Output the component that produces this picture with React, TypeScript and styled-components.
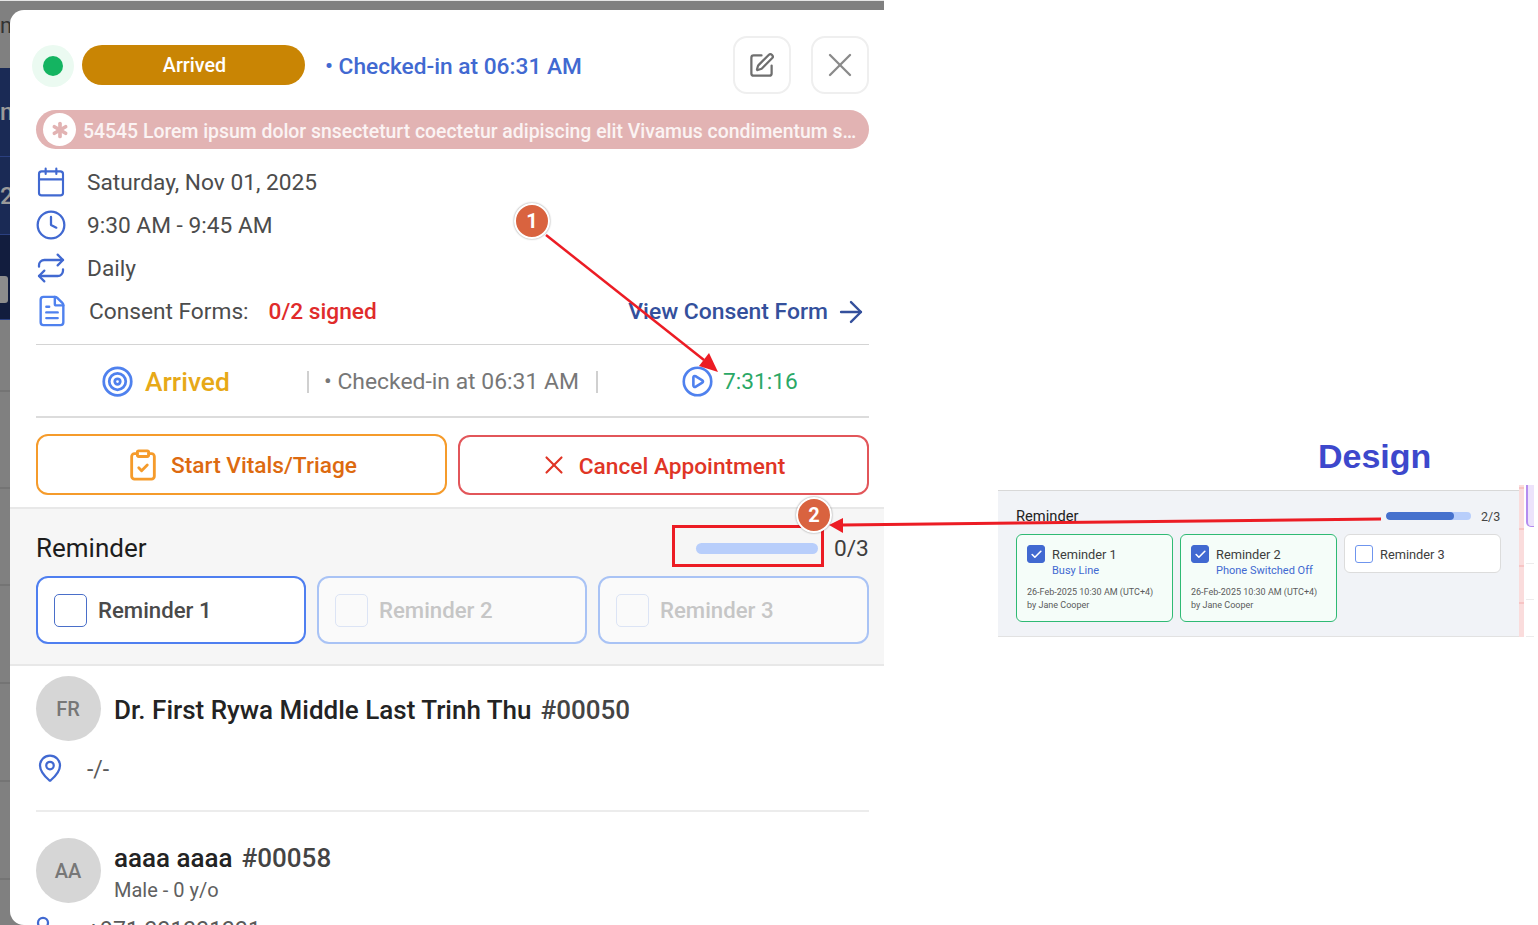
import React from "react";
import styled, { createGlobalStyle } from "styled-components";
import {
  Asterisk, ArrowRight, Calendar, Check, CirclePlay, ClipboardCheck, Clock, FileText, MapPin, Repeat, SquarePen, Target, User, X,
} from "lucide-react";

const Global = createGlobalStyle`
  html, body { margin: 0; padding: 0; background: #fff; overflow: hidden; }
  * { box-sizing: border-box; }
  body { font-family: Roboto, "Liberation Sans", sans-serif; }
`;

const Root = styled.div`
  position: relative; width: 1538px; height: 925px; overflow: hidden; display: flex; background: #fff;
`;
const Shot = styled.div`
  width: 884px; height: 925px; flex: none; display: flex; background: #808080;
  border-top: 1px solid #e6e6e6;
`;
const Backdrop = styled.div`
  width: 10px; flex: none; display: flex; flex-direction: column; overflow: hidden;
`;
const BackTop = styled.div`
  height: 67px; color: #333; font-size: 22px; line-height: 50px; white-space: nowrap;
`;
const BackNavy = styled.div<{ $dark?: boolean; $h: number }>`
  height: ${(p) => p.$h}px; flex: none; background: ${(p) => (p.$dark ? "#121d3e" : "#1a2a55")};
  border-bottom: 1px solid #2b4080; color: #9a9a9a; font-size: 24px; font-weight: 500;
  display: flex; align-items: center; white-space: nowrap; overflow: hidden; position: relative;
`;
const BackChip = styled.div`
  width: 8px; height: 27px; background: #8c8c8c; border-radius: 0 3px 3px 0; margin-top: 24px;
`;
const BackRow = styled.div<{ $h: number }>`
  height: ${(p) => p.$h}px; flex: none; border-bottom: 2px solid #747474;
`;

const Modal = styled.div`
  width: 874px; height: 915px; margin-top: 9px; background: #fff; border-radius: 14px 0 0 14px;
  overflow: hidden; display: flex; flex-direction: column;
`;
const Top = styled.div`
  flex: none; padding: 26px 15px 0 26px; display: flex; flex-direction: column;
`;
const Header = styled.div`
  display: flex; align-items: center; height: 58px; margin-left: -4px;
`;
const Dot = styled.div`
  width: 42px; height: 42px; margin-top: 2px; border-radius: 50%; background: #ebfaf1; display: flex; align-items: center; justify-content: center; flex: none;
`;
const DotInner = styled.div`
  width: 20px; height: 20px; border-radius: 50%; background: #14b461;
`;
const StatusPill = styled.div`
  width: 223px; height: 40px; margin-left: 8px; padding-left: 2px; border-radius: 20px; background: #c98504; color: #fff;
  display: flex; align-items: center; justify-content: center; font-size: 19.7px; font-weight: 500;
`;
const CheckedIn = styled.div`
  margin: 2px 0 0 20px; color: #4169d1; font-size: 22.7px; font-weight: 500; flex: 1; white-space: nowrap;
`;
const IconBtn = styled.div`
  width: 58px; height: 58px; border: 2px solid #efefef; border-radius: 14px; margin-left: 20px; color: #6f6f6f;
  display: flex; align-items: center; justify-content: center; flex: none;
`;
const EditBtn = styled(IconBtn)`
  padding-right: 2px;
`;
const CloseBtn = styled(IconBtn)`
  color: #8a8a8a;
`;
const Alert = styled.div`
  margin-top: 16px; height: 39px; border-radius: 20px; background: #e2b3b3; display: flex; align-items: center;
  padding: 0 11px 0 7px; gap: 7px; color: #fbf3f3; font-size: 19.4px; font-weight: 500;
`;
const AlertIcon = styled.div`
  width: 33px; height: 33px; border-radius: 50%; background: #fff; color: #e2b3b3; display: flex; align-items: center; justify-content: center; flex: none;
`;
const AlertText = styled.div`
  flex: 1; min-width: 0; padding-top: 3px; overflow: hidden; white-space: nowrap; text-overflow: ellipsis;
`;
const Info = styled.div`
  margin-top: 11px; display: flex; flex-direction: column; border-bottom: 1px solid #d4d4d4; padding-bottom: 12px;
`;
const InfoRow = styled.div`
  height: 43px; padding-top: 2px; display: flex; align-items: center; color: #4c4c4c; font-size: 22.7px;
`;
const InfoIcon = styled.div`
  width: 52px; flex: none; color: #4169d1; display: flex; align-items: center; margin: -2px 0 0 -1px;
`;
const Signed = styled.span`
  margin-left: 20px; color: #e02b2b; font-weight: 500;
`;
const ConsentLabel = styled.span`
  margin-left: 2px;
`;
const ViewLink = styled.div`
  margin-left: auto; margin-right: 1px; display: flex; align-items: center; gap: 6px; color: #34509c; font-size: 22.9px; font-weight: 500;
`;
const StatusRow = styled.div`
  height: 73px; padding: 2px 0 0 65px; display: flex; align-items: center; border-bottom: 2px solid #dcdcdc; color: #777; font-size: 22.9px;
`;
const ArrivedText = styled.span`
  margin-left: 11px; color: #e7a918; font-size: 26.4px; font-weight: 500; width: 162px;
`;
const Sep = styled.span`
  width: 2px; height: 22px; background: #d0d0d0; flex: none;
`;
const CheckedGray = styled.span`
  margin: 0 17px 0 15px; white-space: nowrap;
`;
const Timer = styled.span`
  margin-left: 9px; color: #2aa866; font-size: 22.7px;
`;
const PlayWrap = styled.span`
  margin-left: 83px; color: #4f81ee; display: flex;
`;
const Actions = styled.div`
  margin-top: 16px; display: grid; grid-template-columns: 411px 411px; gap: 11px; height: 61px;
`;
const ActionBtn = styled.div<{ $tone: "orange" | "red" }>`
  border: 2px solid ${(p) => (p.$tone === "orange" ? "#f59b2b" : "#e2565a")}; border-radius: 12px;
  color: ${(p) => (p.$tone === "orange" ? "#dd6a10" : "#e03526")}; font-size: 22.7px; font-weight: 500;
  display: flex; align-items: center; justify-content: center; gap: ${(p) => (p.$tone === "orange" ? 11 : 10)}px;
  padding-top: 2px; padding-right: ${(p) => (p.$tone === "orange" ? 0 : 3)}px;
  ${(p) => (p.$tone === "red" ? "margin-top: 1px;" : "")}
  svg { margin-top: -2px; color: ${(p) => (p.$tone === "orange" ? "#f59b2b" : "#e03526")}; }
`;
const ReminderSection = styled.div`
  flex: none; margin-top: 12px; height: 159px; background: #f6f6f6; border-top: 2px solid #e8e8e8; border-bottom: 2px solid #e8e8e8;
  padding: 0 15px 0 26px; display: flex; flex-direction: column;
`;
const ReminderHead = styled.div`
  height: 67px; display: flex; align-items: center; padding-top: 11px;
`;
const ReminderTitle = styled.div`
  flex: 1; font-size: 26px; font-weight: 400; color: #1d1d1d;
`;
const Track = styled.div`
  width: 122px; height: 11px; border-radius: 6px; background: #b8cefb;
`;
const Count = styled.div`
  margin-left: 16px; width: 35px; font-size: 22.7px; color: #3e3e3e;
`;
const ReminderCards = styled.div`
  display: grid; grid-template-columns: 270px 270px 271px; gap: 11px; height: 68px;
`;
const ReminderCard = styled.div<{ $off?: boolean }>`
  border: 2.5px solid ${(p) => (p.$off ? "#a9c3f5" : "#4f7ff0")}; border-radius: 12px; background: ${(p) => (p.$off ? "#fafafa" : "#fff")};
  display: flex; align-items: center; padding-left: 16px; gap: 11px; font-size: 22.2px; font-weight: 500;
  color: ${(p) => (p.$off ? "#c6c6c6" : "#4a4a4a")};
`;
const Box = styled.div<{ $off?: boolean }>`
  width: 33px; height: 33px; border-radius: 5px; border: 1.5px solid ${(p) => (p.$off ? "#dce4f5" : "#4a6fc9")}; flex: none;
`;
const People = styled.div`
  flex: none; padding: 0 15px 0 26px; display: flex; flex-direction: column;
`;
const Person = styled.div<{ $top: number }>`
  display: flex; align-items: center; gap: 13px; margin-top: ${(p) => p.$top}px;
`;
const PersonText = styled.div`
  padding-top: 3px;
`;
const Avatar = styled.div`
  width: 65px; height: 65px; border-radius: 50%; background: #d6d6d6; color: #777; font-size: 20px; font-weight: 500;
  display: flex; align-items: center; justify-content: center; flex: none; padding-right: 1px;
`;
const Name = styled.div`
  font-size: 26px; font-weight: 500; color: #232323; white-space: nowrap;
`;
const DoctorName = styled(Name)`
  padding-top: 2px;
`;
const Id = styled.span`
  margin-left: 9px; color: #444;
`;
const SubText = styled.div`
  margin-top: 5px; font-size: 20px; color: #606060;
`;
const PlainRow = styled.div<{ $top: number }>`
  display: flex; align-items: center; height: 30px; margin-top: ${(p) => p.$top}px; color: #5a5a5a; font-size: 23px;
`;
const ContactIcon = styled.div`
  width: 52px; flex: none; margin: -3px 0 0 -8px; color: #4169d1; display: flex;
`;
const PhoneText = styled.span`
  margin-left: 7px;
`;
const Rule = styled.div`
  margin-top: 26px; height: 2px; background: #ececec;
`;

const DesignCol = styled.div`
  flex: 1; padding: 437px 0 0 114px; display: flex; flex-direction: column;
`;
const DesignTitle = styled.div`
  width: 521px; height: 38px; line-height: 38px; padding-left: 320px; font-family: "Liberation Sans", sans-serif; font-weight: 700; font-size: 34px; color: #3d48cc;
`;
const DesignRow = styled.div`
  margin-top: 10px; display: flex; width: 536px; height: 152px;
`;
const DesignPanel = styled.div`
  width: 521px; height: 147px; margin-top: 5px; background: #f1f3f7; border-top: 1px solid #d8d8d8; border-bottom: 1px solid #e2e2e2;
  padding: 0 18px; display: flex; flex-direction: column; flex: none;
`;
const DHead = styled.div`
  height: 43px; display: flex; align-items: center; padding-top: 7px;
`;
const DTitle = styled.div`
  flex: 1; font-size: 14.7px; color: #222;
`;
const DTrack = styled.div`
  width: 85px; height: 8px; border-radius: 4px; background: #b8cefb; overflow: hidden;
`;
const DFill = styled.div`
  height: 100%; border-radius: 4px; background: #4671cd;
`;
const DCount = styled.div`
  margin-left: 10px; width: 20px; font-size: 12.5px; color: #444;
`;
const DCards = styled.div`
  display: grid; grid-template-columns: 157px 157px 157px; gap: 7px; align-items: start;
`;
const DCard = styled.div<{ $done?: boolean }>`
  height: ${(p) => (p.$done ? 88 : 39)}px; border-radius: 6px; padding: 10px 10px 0;
  border: 1px solid ${(p) => (p.$done ? "#2fba74" : "#dcdcdc")}; background: ${(p) => (p.$done ? "#f5fdf9" : "#fff")};
`;
const DLine = styled.div`
  display: flex; align-items: center; gap: 7px; font-size: 12.8px; color: #3d3d3d; height: 18px;
`;
const DBox = styled.div<{ $on?: boolean }>`
  width: 18px; height: 18px; border-radius: 3px; flex: none; display: flex; align-items: center; justify-content: center;
  color: #fff; background: ${(p) => (p.$on ? "#4169d1" : "#fff")}; border: 1px solid ${(p) => (p.$on ? "#4169d1" : "#6f95ee")};
`;
const DReason = styled.div`
  margin: 1px 0 0 25px; font-size: 11px; line-height: 14px; color: #4169d1; white-space: nowrap;
`;
const DMeta = styled.div`
  margin-top: 8px; font-size: 9px; line-height: 13px; color: #5b5b5b; white-space: nowrap;
`;
const Stripe = styled.div`
  width: 5px; height: 152px; flex: none;
  background: repeating-linear-gradient(to bottom, #fadcdc 0, #fadcdc 35px, #f7c4c4 35px, #f7c4c4 37px);
  background-position: 0 8px;
`;
const Side = styled.div`
  margin-left: 2px; width: 8px; display: flex; flex-direction: column;
`;
const Purple = styled.div`
  height: 43px; background: #ece3fb; border-left: 2px solid #b48cf0; border-bottom: 1px solid #b48cf0; border-radius: 0 0 0 5px;
`;
const SideRow = styled.div`
  height: 37px; border-bottom: 1px solid #ececec;
`;

const Overlay = styled.svg`
  position: absolute; left: 0; top: 0; width: 1538px; height: 925px; pointer-events: none;
`;
const Badge = styled.div<{ $x: number; $y: number }>`
  position: absolute; left: ${(p) => p.$x}px; top: ${(p) => p.$y}px; width: 36px; height: 36px; border-radius: 50%;
  background: #d9633f; border: 2px solid #fff; box-shadow: 0 0 2px rgba(0,0,0,.45); color: #fff; font-size: 20px; font-weight: 700;
  display: flex; align-items: center; justify-content: center; font-family: Roboto, sans-serif;
`;
const Highlight = styled.div`
  position: absolute; left: 672px; top: 525px; width: 152px; height: 42px; border: 3px solid #ec1c24;
`;

const DesignCard = ({ label, reason }: { label: string; reason: string }) => (
  <DCard $done>
    <DLine>
      <DBox $on><Check size={13} strokeWidth={3} /></DBox>
      {label}
    </DLine>
    <DReason>{reason}</DReason>
    <DMeta>
      26-Feb-2025 10:30 AM (UTC+4)
      <br />
      by Jane Cooper
    </DMeta>
  </DCard>
);

export default function App() {
  return (
    <Root>
      <Global />
      <Shot>
        <Backdrop>
          <BackTop>m</BackTop>
          <BackNavy $h={89}>n</BackNavy>
          <BackNavy $h={78}>2</BackNavy>
          <BackNavy $dark $h={85}><BackChip /></BackNavy>
          <BackRow $h={72} />
          <BackRow $h={97} />
          <BackRow $h={97} />
          <BackRow $h={98} />
          <BackRow $h={98} />
          <BackRow $h={98} />
        </Backdrop>
        <Modal>
          <Top>
            <Header>
              <Dot><DotInner /></Dot>
              <StatusPill>Arrived</StatusPill>
              <CheckedIn>• Checked-in at 06:31 AM</CheckedIn>
              <EditBtn><SquarePen size={27} strokeWidth={2} /></EditBtn>
              <CloseBtn><X size={40} strokeWidth={1.4} /></CloseBtn>
            </Header>
            <Alert>
              <AlertIcon><Asterisk size={26} strokeWidth={3.4} /></AlertIcon>
              <AlertText>54545 Lorem ipsum dolor snsecteturt coectetur adipiscing elit Vivamus condimentum sagittis lacus vel augue laoreet</AlertText>
            </Alert>
            <Info>
              <InfoRow>
                <InfoIcon><Calendar size={32} strokeWidth={1.6} /></InfoIcon>
                Saturday, Nov 01, 2025
              </InfoRow>
              <InfoRow>
                <InfoIcon><Clock size={32} strokeWidth={1.7} /></InfoIcon>
                9:30 AM - 9:45 AM
              </InfoRow>
              <InfoRow>
                <InfoIcon><Repeat size={32} strokeWidth={1.7} /></InfoIcon>
                Daily
              </InfoRow>
              <InfoRow>
                <InfoIcon><FileText size={34} strokeWidth={1.7} color="#4f81ee" /></InfoIcon>
                <ConsentLabel>Consent Forms:</ConsentLabel>
                <Signed>0/2 signed</Signed>
                <ViewLink>View Consent Form <ArrowRight size={34} strokeWidth={1.7} /></ViewLink>
              </InfoRow>
            </Info>
            <StatusRow>
              <Target size={33} strokeWidth={2} color="#4f81ee" />
              <ArrivedText>Arrived</ArrivedText>
              <Sep />
              <CheckedGray>• Checked-in at 06:31 AM</CheckedGray>
              <Sep />
              <PlayWrap><CirclePlay size={33} strokeWidth={1.9} /></PlayWrap>
              <Timer>7:31:16</Timer>
            </StatusRow>
            <Actions>
              <ActionBtn $tone="orange"><ClipboardCheck size={34} strokeWidth={2} />Start Vitals/Triage</ActionBtn>
              <ActionBtn $tone="red"><X size={30} strokeWidth={1.7} />Cancel Appointment</ActionBtn>
            </Actions>
          </Top>
          <ReminderSection>
            <ReminderHead>
              <ReminderTitle>Reminder</ReminderTitle>
              <Track />
              <Count>0/3</Count>
            </ReminderHead>
            <ReminderCards>
              <ReminderCard><Box />Reminder 1</ReminderCard>
              <ReminderCard $off><Box $off />Reminder 2</ReminderCard>
              <ReminderCard $off><Box $off />Reminder 3</ReminderCard>
            </ReminderCards>
          </ReminderSection>
          <People>
            <Person $top={10}>
              <Avatar>FR</Avatar>
              <DoctorName>Dr. First Rywa Middle Last Trinh Thu<Id>#00050</Id></DoctorName>
            </Person>
            <PlainRow $top={13}>
              <InfoIcon><MapPin size={30} strokeWidth={1.8} /></InfoIcon>
              -/-
            </PlainRow>
            <Rule />
            <Person $top={26}>
              <Avatar>AA</Avatar>
              <PersonText>
                <Name>aaaa aaaa<Id>#00058</Id></Name>
                <SubText>Male - 0 y/o</SubText>
              </PersonText>
            </Person>
            <PlainRow $top={12}>
              <ContactIcon><User size={30} strokeWidth={1.8} /></ContactIcon>
              <PhoneText>+971 331331331</PhoneText>
            </PlainRow>
          </People>
        </Modal>
      </Shot>
      <DesignCol>
        <DesignTitle>Design</DesignTitle>
        <DesignRow>
          <DesignPanel>
            <DHead>
              <DTitle>Reminder</DTitle>
              <DTrack><DFill style={{ width: "80%" }} /></DTrack>
              <DCount>2/3</DCount>
            </DHead>
            <DCards>
              <DesignCard label="Reminder 1" reason="Busy Line" />
              <DesignCard label="Reminder 2" reason="Phone Switched Off" />
              <DCard>
                <DLine><DBox />Reminder 3</DLine>
              </DCard>
            </DCards>
          </DesignPanel>
          <Stripe />
          <Side>
            <Purple />
            <SideRow />
            <SideRow />
            <SideRow />
          </Side>
        </DesignRow>
      </DesignCol>
      <Highlight />
      <Overlay viewBox="0 0 1538 925">
        <line x1="546" y1="235" x2="704" y2="360" stroke="#ec1c24" strokeWidth="2.5" />
        <polygon points="718,372 699,366 709,353" fill="#ec1c24" />
        <line x1="1381" y1="519" x2="842" y2="525" stroke="#ec1c24" strokeWidth="3" />
        <polygon points="829,525 843,518 843,533" fill="#ec1c24" />
      </Overlay>
      <Badge $x={514} $y={203}>1</Badge>
      <Badge $x={796} $y={497}>2</Badge>
    </Root>
  );
}
